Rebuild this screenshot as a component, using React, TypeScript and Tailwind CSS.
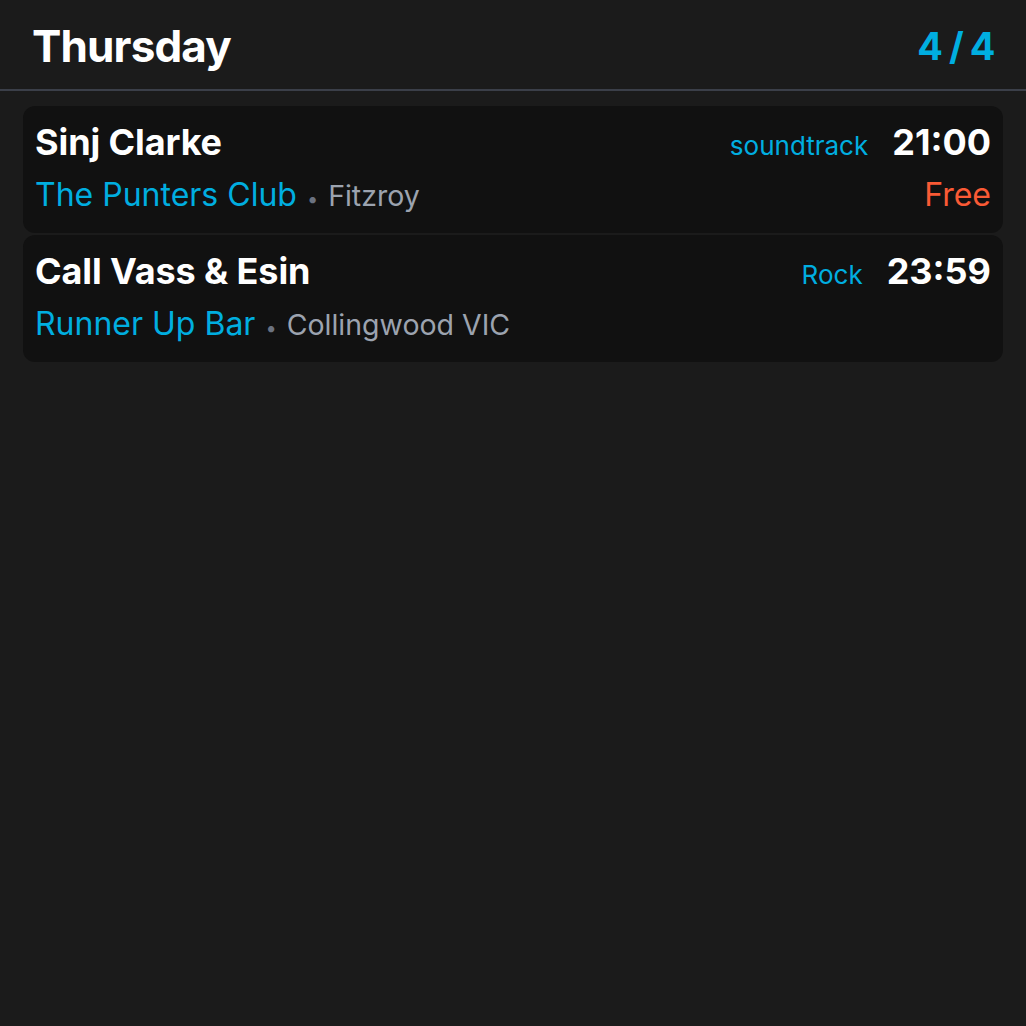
import React from "react";

type Gig = {
  artist: string;
  genre: string;
  time: string;
  venue: string;
  suburb: string;
  price?: string;
};

const gigs: Gig[] = [
  { artist: "Sinj Clarke", genre: "soundtrack", time: "21:00", venue: "The Punters Club", suburb: "Fitzroy", price: "Free" },
  { artist: "Call Vass & Esin", genre: "Rock", time: "23:59", venue: "Runner Up Bar", suburb: "Collingwood VIC" },
];

export default function App() {
  return (
    <div
      className="w-full min-h-[1026px] bg-[#1b1b1b] text-white"
      style={{ fontFamily: "Inter, 'Noto Sans', sans-serif" }}
    >
      <header className="h-[91px] px-8 flex items-center justify-between border-b-2 border-[#3b3f49]">
        <h1 className="text-[44px] font-bold tracking-[-0.85px] leading-none pt-[2px]">Thursday</h1>
        <div className="text-[38px] font-bold text-[#00aee0] leading-none tracking-[-1.5px] pt-[2px]">4 / 4</div>
      </header>
      <main className="px-[23px] pt-[15px] flex flex-col gap-[2px]">
        {gigs.map((g) => (
          <div key={g.artist} className="rounded-xl bg-[#111111] px-3 pt-[14px] pb-[16px] flex flex-col gap-[9px]">
            <div className="h-[44px] flex items-baseline justify-between">
              <span className="text-[36px] font-bold tracking-[-0.1px] leading-[44px]">{g.artist}</span>
              <div className="flex items-baseline gap-[24px]">
                <span className="text-[26px] text-[#00aee0] leading-[44px]">{g.genre}</span>
                <span className="text-[36px] font-bold leading-[44px]">{g.time}</span>
              </div>
            </div>
            <div className="h-[44px] flex items-baseline justify-between">
              <div className="flex items-baseline">
                <span className="text-[32px] text-[#00aee0] leading-[44px]">{g.venue}</span>
                <span className="text-[20px] text-[#6b7280] mx-[10px] leading-[44px]">•</span>
                <span className="text-[28.5px] text-[#9ca3af] leading-[44px]">{g.suburb}</span>
              </div>
              {g.price && <span className="text-[32px] text-[#fa5a35] leading-[44px]">{g.price}</span>}
            </div>
          </div>
        ))}
      </main>
    </div>
  );
}
